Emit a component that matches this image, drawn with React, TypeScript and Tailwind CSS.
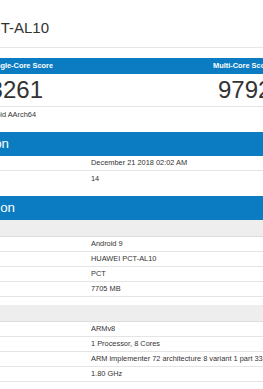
import type { ReactNode } from "react";

// Shows the end of a label; the start runs off the left edge of the column.
function Tail({ className, children }: { className: string; children: ReactNode }) {
  return (
    <div className={`flex justify-end overflow-hidden whitespace-nowrap ${className}`}>
      <span className="shrink-0">{children}</span>
    </div>
  );
}

function InfoRow({ value, line = true }: { value: string; line?: boolean }) {
  return (
    <div
      className={`flex h-[15px] items-center pl-[91px] text-[7.4px] text-[#333] ${
        line ? "border-b border-[#e4e4e4]" : ""
      }`}
    >
      <span className="whitespace-nowrap">{value}</span>
    </div>
  );
}

function SectionHeader({ children }: { children: ReactNode }) {
  return (
    <div className="flex h-[24px] items-center bg-[#0b7cc1] text-[13.3px] leading-none text-white">
      {children}
    </div>
  );
}

export default function App() {
  return (
    <div className="h-[389px] w-[263px] overflow-hidden bg-white font-['Liberation_Sans',Arial,sans-serif]">
      {/* Device title */}
      <div className="h-[48px] border-b border-[#e6e6e6] pt-[19px] text-[15px] leading-[17px] text-[#333]">
        <Tail className="w-[49px]">HUAWEI PCT-AL10</Tail>
      </div>

      {/* Scores */}
      <div className="mt-[10px] flex h-[16px] items-center bg-[#0b7cc1] text-[7.4px] font-bold text-white">
        <div className="w-[213px] shrink-0">
          <Tail className="w-[53px]">Single-Core Score</Tail>
        </div>
        <span className="whitespace-nowrap">Multi-Core Score</span>
      </div>
      <div className="flex h-[33px] border-b border-[#e4e4e4] pt-[2px] text-[24px] leading-[28px] text-[#333]">
        <div className="w-[218px] shrink-0">
          <Tail className="w-[43px]">3261</Tail>
        </div>
        <span className="whitespace-nowrap">9792</span>
      </div>
      <div className="flex h-[15px] items-center text-[7.4px] text-[#333]">
        <Tail className="w-[36px]">Android AArch64</Tail>
      </div>

      {/* Result information */}
      <div className="mt-[10px]">
        <SectionHeader>
          <Tail className="w-[9px]">Result Information</Tail>
        </SectionHeader>
        <InfoRow value="December 21 2018 02:02 AM" />
        <InfoRow value="14" line={false} />
      </div>

      {/* System information */}
      <div className="mt-[10px]">
        <SectionHeader>
          <Tail className="w-[15px]">System Information</Tail>
        </SectionHeader>
        <div className="h-[17px] border-b border-[#dddddd] bg-[#eeeeee]" />
        <InfoRow value="Android 9" />
        <InfoRow value="HUAWEI PCT-AL10" />
        <InfoRow value="PCT" />
        <InfoRow value="7705 MB" />

        <div className="mt-[8px] h-[17px] border-b border-[#dddddd] bg-[#eeeeee]" />
        <InfoRow value="ARMv8" />
        <InfoRow value="1 Processor, 8 Cores" />
        <InfoRow value="ARM implementer 72 architecture 8 variant 1 part 3340 revision 0" />
        <InfoRow value="1.80 GHz" />
      </div>
    </div>
  );
}
